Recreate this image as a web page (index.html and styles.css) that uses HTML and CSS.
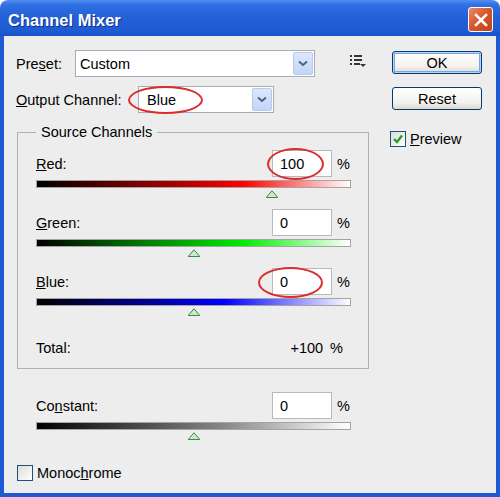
FILE: index.html
```html
<!DOCTYPE html>
<html lang="en">
<head>
  <meta charset="UTF-8" />
  <title>Channel Mixer</title>
  <link rel="stylesheet" href="styles.css">
</head>
<body>
<div class="window">
  <div class="titlebar">
    <span class="title">Channel Mixer</span>
    <button class="close" title="Close">
      <svg width="14" height="14" viewBox="0 0 14 14"><path d="M2 2 L12 12 M12 2 L2 12" stroke="#fff" stroke-width="2.6" stroke-linecap="square"/></svg>
    </button>
  </div>

  <div class="client">
    <div class="main">
      <div class="row preset-row">
        <span class="row-label preset-label">Pre<u>s</u>et:</span>
        <div class="combo preset-combo">
          <span class="combo-text">Custom</span>
          <span class="combo-btn"><svg width="10" height="7" viewBox="0 0 10 7"><path d="M1 1.5 L5 5 L9 1.5" fill="none" stroke="#4d6185" stroke-width="2"/></svg></span>
        </div>
        <svg class="list-icon" width="17" height="13" viewBox="0 0 17 13">
          <rect x="0" y="0" width="2" height="2" fill="#333"/>
          <rect x="4" y="0" width="8" height="2" fill="#333"/>
          <rect x="0" y="4" width="2" height="2" fill="#333"/>
          <rect x="4" y="4" width="8" height="2" fill="#333"/>
          <rect x="0" y="8" width="2" height="2" fill="#333"/>
          <rect x="4" y="8" width="6" height="2" fill="#333"/>
          <path d="M10 9 L16 9 L13 12 Z" fill="#333"/>
        </svg>
      </div>

      <div class="row output-row">
        <span class="row-label output-label"><u>O</u>utput Channel:</span>
        <div class="combo output-combo">
          <span class="combo-text">Blue</span>
          <span class="combo-btn"><svg width="10" height="7" viewBox="0 0 10 7"><path d="M1 1.5 L5 5 L9 1.5" fill="none" stroke="#4d6185" stroke-width="2"/></svg></span>
          <span class="mark mark-output"></span>
        </div>
      </div>

      <fieldset class="group">
        <legend>Source Channels</legend>

        <div class="channel">
          <div class="chan-head">
            <span class="chan-label"><u>R</u>ed:</span>
            <span class="value">100<span class="mark mark-red"></span></span>
            <span class="pct">%</span>
          </div>
          <div class="bar bar-red"></div>
          <div class="thumb-track"><span class="thumb" style="left:75%"></span></div>
        </div>

        <div class="channel">
          <div class="chan-head">
            <span class="chan-label"><u>G</u>reen:</span>
            <span class="value">0</span>
            <span class="pct">%</span>
          </div>
          <div class="bar bar-green"></div>
          <div class="thumb-track"><span class="thumb" style="left:50%"></span></div>
        </div>

        <div class="channel">
          <div class="chan-head">
            <span class="chan-label"><u>B</u>lue:</span>
            <span class="value">0<span class="mark mark-blue"></span></span>
            <span class="pct">%</span>
          </div>
          <div class="bar bar-blue"></div>
          <div class="thumb-track"><span class="thumb" style="left:50%"></span></div>
        </div>

        <div class="total">
          <span class="chan-label">Total:</span>
          <span class="total-value">+100</span>
          <span class="total-pct">%</span>
        </div>
      </fieldset>

      <div class="channel constant">
        <div class="chan-head">
          <span class="chan-label">Co<u>n</u>stant:</span>
          <span class="value">0</span>
          <span class="pct">%</span>
        </div>
        <div class="bar bar-gray"></div>
        <div class="thumb-track"><span class="thumb" style="left:50%"></span></div>
      </div>

      <label class="check mono">
        <span class="box"></span>
        <span>Monoc<u>h</u>rome</span>
      </label>
    </div>

    <div class="side">
      <button class="btn default">OK</button>
      <button class="btn reset">Reset</button>
      <label class="check preview">
        <span class="box">
          <svg width="12" height="12" viewBox="0 0 12 12"><path d="M2 6 L5 9 L10 2.5" fill="none" stroke="#21a121" stroke-width="2.4"/></svg>
        </span>
        <span><u>P</u>review</span>
      </label>
    </div>
  </div>
</div>
</body>
</html>
```

FILE: styles.css
```css
/* reset */
* {
  margin: 0;
  padding: 0;
  box-sizing: border-box;
}

html, body {
  background: #fff;
  font-family: "Liberation Sans", Arial, sans-serif;
  font-size: 14.5px;
  color: #000;
}

.window {
  width: 500px;
  height: 497px;
  display: flex;
  flex-direction: column;
}

/* title bar */
.titlebar {
  flex: none;
  height: 36px;
  display: flex;
  align-items: center;
  justify-content: space-between;
  padding: 0 7px 0 8px;
  border-radius: 8px 8px 0 0;
  background: linear-gradient(#4f8ff2, #2f6fe2 14%, #2462d8 45%, #1f5bd2 85%, #1a52c8);
}

.title {
  color: #fff;
  font-weight: bold;
  font-size: 16.5px;
  text-shadow: 1px 1px 0 #0c2d8a;
  padding-top: 4px;
}

.close {
  width: 25px;
  height: 25px;
  margin-top: 3px;
  display: flex;
  align-items: center;
  justify-content: center;
  border: 1px solid #fff;
  border-radius: 3px;
  background: linear-gradient(135deg, #eb8a66, #d5552a 50%, #c2421a);
}

/* window body */
.client {
  flex: 1;
  display: grid;
  grid-template-columns: 354px 90px;
  column-gap: 22px;
  align-items: start;
  padding: 14px 0 0 12px;
  background: #ededed;
  border: 4px solid #1f5ad3;
  border-top: 0;
}

.row {
  display: flex;
  align-items: center;
  height: 27px;
}

.preset-label { width: 59px; }
.output-label { width: 122px; }
.output-row { margin-top: 9px; }

.combo {
  position: relative;
  display: flex;
  align-items: center;
  height: 27px;
  background: #fff;
  border: 1px solid #a7adb6;
}

.preset-combo { width: 240px; }
.output-combo { width: 136px; }

.combo-text {
  flex: 1;
  padding-left: 4px;
}

.output-combo .combo-text { padding-left: 8px; }

.combo-btn {
  width: 20px;
  height: 23px;
  margin-right: 1px;
  display: flex;
  align-items: center;
  justify-content: center;
  border: 1px solid #b8c9ec;
  border-radius: 2px;
  background: linear-gradient(#dde8fd, #c3d4f7);
}

.list-icon { margin-left: 35px; margin-top: -4px; }

/* red marker circles */
.mark {
  position: absolute;
  border: 2px solid #dd2a2a;
  border-radius: 50%;
  pointer-events: none;
}

.mark-output { left: -11px; top: -1px; width: 75px; height: 28px; }
.mark-red { left: -6px; top: -3px; width: 57px; height: 32px; }
.mark-blue { left: -15px; top: -2px; width: 65px; height: 31px; }

/* group box */
.group {
  margin: 10px 0 0 1px;
  width: 352px;
  border: 1px solid #b0b0b0;
  padding: 9px 17px 11px 18px;
}

.group legend {
  padding: 0 5px;
  line-height: 18px;
}

.channel + .channel { margin-top: 11px; }

.chan-head {
  display: flex;
  align-items: center;
  height: 27px;
}

.chan-label { flex: 1; }

.value {
  position: relative;
  width: 60px;
  height: 27px;
  display: flex;
  align-items: center;
  padding-left: 7px;
  background: #fff;
  border: 1px solid #b9b9b9;
}

.pct {
  width: 14px;
  margin-left: 5px;
}

.bar {
  height: 8px;
  margin-top: 3px;
  border: 1px solid #a4a4a4;
}

.bar-red { background: linear-gradient(to right, #000, #ff0000 66%, #fff); }
.bar-green { background: linear-gradient(to right, #000, #00ee00 66%, #fff); }
.bar-blue { background: linear-gradient(to right, #000, #0000ff 60%, #fff); }
.bar-gray { background: linear-gradient(to right, #000, #888 60%, #fff); }

.thumb-track {
  position: relative;
  height: 8px;
  margin-top: 2px;
}

.thumb {
  position: absolute;
  top: 0;
  width: 13px;
  height: 8px;
  transform: translateX(-50%);
  background: url("data:image/svg+xml,%3Csvg xmlns='http://www.w3.org/2000/svg' width='13' height='8'%3E%3Cpath d='M6.5 0.8 L12.3 7.5 L0.7 7.5 Z' fill='%23cfe9cf' stroke='%233c8a3c'/%3E%3C/svg%3E") no-repeat;
}

.total {
  display: flex;
  align-items: center;
  height: 18px;
  margin-top: 23px;
}

.total-pct {
  margin-left: 7px;
  margin-right: 8px;
}

.constant {
  width: 315px;
  margin: 23px 0 0 20px;
}

/* checkboxes */
.check {
  display: flex;
  align-items: center;
  gap: 4px;
}

.box {
  width: 16px;
  height: 16px;
  display: flex;
  align-items: center;
  justify-content: center;
  border: 1px solid #1c5180;
  background: linear-gradient(135deg, #dcdcd6, #fff);
}

.mono { margin: 25px 0 0 1px; }

/* right column */
.side {
  display: flex;
  flex-direction: column;
  align-items: flex-start;
  padding-top: 1px;
}

.btn {
  width: 90px;
  height: 23px;
  font-family: inherit;
  font-size: 14.5px;
  border: 1px solid #003c74;
  border-radius: 3px;
  background: linear-gradient(#fff, #f3f2ee 70%, #dcd8cd);
}

.btn.default {
  box-shadow: inset 0 0 0 1px #b9d3f5, inset 0 0 0 2px #7aa6e8;
}

.reset { margin-top: 13px; }
.preview { margin-top: 21px; margin-left: -2px; }
```
